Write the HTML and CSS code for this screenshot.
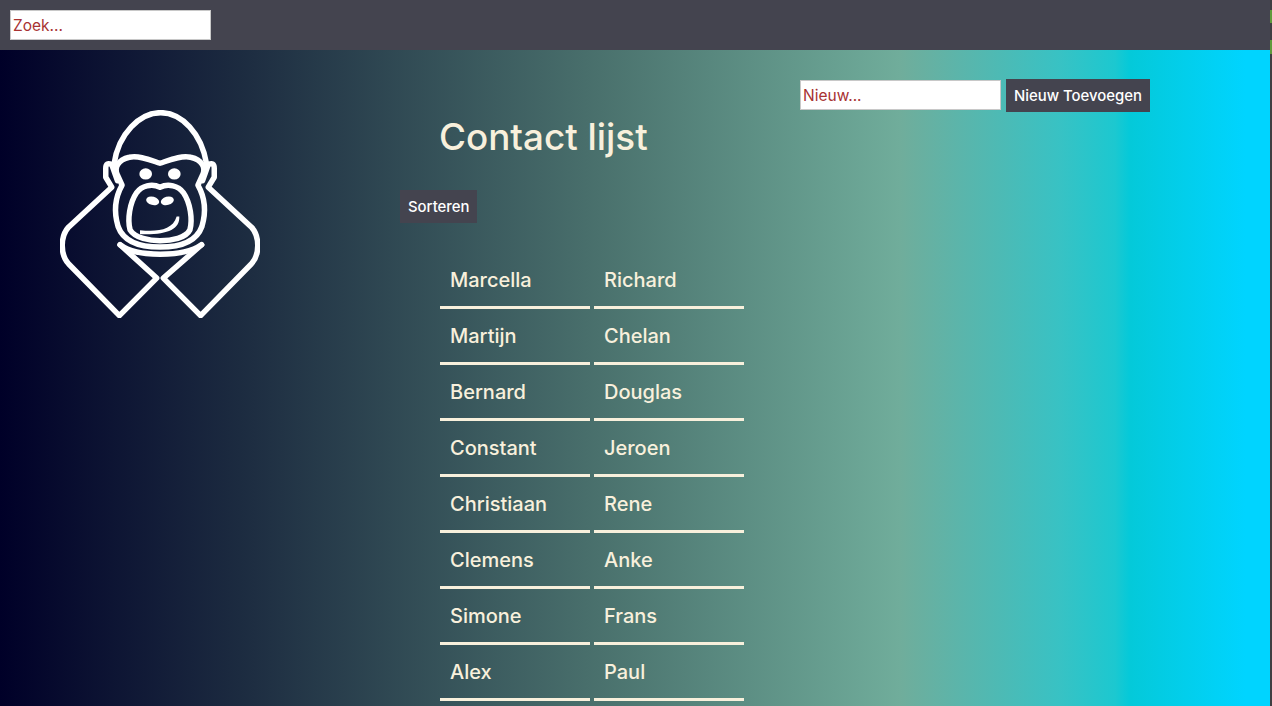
FILE: index.html
```html
<!DOCTYPE html>
<html lang="nl">
<head>
<meta charset="utf-8">
<title>Contact lijst</title>
<link rel="stylesheet" href="styles.css">
</head>
<body>
<header class="topbar">
  <input class="field" type="text" placeholder="Zoek...">
</header>
<main class="page">
  <aside class="logo-col">
    <svg class="logo" viewBox="60 60 600 625" width="200" height="208" aria-label="Gorilla logo">
      <g fill="none" stroke="#fff" stroke-width="16.5" stroke-linejoin="round" stroke-linecap="round">
        <path d="M222 222C235 130 300 68 362 68C425 68 485 130 500 222"/>
        <path d="M240 465L350 565L238 678L85 522C60 495 60 440 85 412L215 292L197 262V235Q197 215 215 224L232 272"/>
        <path d="M485 465L370 565L482 678L635 522C660 495 660 440 635 412L505 292L523 262V235Q523 215 505 224L488 272"/>
        <path d="M360 220C330 210 295 195 268 202C232 210 222 235 232 255L246 286C224 325 222 370 234 410C252 460 310 472 360 472C410 472 468 460 486 410C498 370 496 325 474 286L488 255C498 235 488 210 452 202C425 195 390 210 360 220Z"/>
        <path d="M360 292C335 280 305 288 290 308C268 340 262 390 270 420C285 445 330 453 360 453C395 453 438 445 450 420C458 390 452 340 430 308C415 288 385 280 360 292Z"/>
        <path d="M240 465C290 503 430 503 485 465"/>
      </g>
      <g fill="#fff">
        <ellipse cx="317" cy="252" rx="19" ry="17"/>
        <ellipse cx="403" cy="252" rx="19" ry="17"/>
        <ellipse cx="338" cy="333" rx="20" ry="12.5" transform="rotate(15 338 333)"/>
        <ellipse cx="382" cy="333" rx="20" ry="12.5" transform="rotate(-15 382 333)"/>
        <path d="M300 421C350 426 398 422 410 380L418 380C420 420 380 436 300 433Z"/>
      </g>
    </svg>
  </aside>
  <section class="list-col">
    <h1 class="title">Contact lijst</h1>
    <button class="btn" type="button">Sorteren</button>
    <ul class="contacts">
      <li>Marcella</li><li>Richard</li>
      <li>Martijn</li><li>Chelan</li>
      <li>Bernard</li><li>Douglas</li>
      <li>Constant</li><li>Jeroen</li>
      <li>Christiaan</li><li>Rene</li>
      <li>Clemens</li><li>Anke</li>
      <li>Simone</li><li>Frans</li>
      <li>Alex</li><li>Paul</li>
    </ul>
  </section>
  <form class="add-form">
    <input class="field" type="text" placeholder="Nieuw...">
    <button class="btn" type="button">Nieuw Toevoegen</button>
  </form>
</main>
</body>
</html>
```
FILE: styles.css
```css
* { box-sizing: border-box; }
html, body { height: 100%; }
body {
  margin: 0;
  padding-right: 2px;
  overflow: hidden;
  font-family: Inter, "Liberation Sans", sans-serif;
  display: flex;
  flex-direction: column;
  background: linear-gradient(180deg, #3f3f42 0 10px, #5f9a3c 10px 23px, #3f3f42 23px 40px, #5f9a3c 40px 54px, #3f3f42 54px);
}
.topbar {
  height: 50px;
  flex: none;
  padding: 10px;
  background: #44444f;
  display: flex;
  align-items: flex-start;
}
.field {
  width: 201px;
  height: 30px;
  padding: 1px 2px;
  border: 1px solid #c8c8c8;
  background: #fff;
  font: 15.5px Inter, "Liberation Sans", sans-serif;
  color: #a52a2a;
  border-radius: 0;
  outline: none;
}
.field::placeholder { color: #a83232; opacity: 1; }
.page {
  flex: 1;
  display: flex;
  align-items: flex-start;
  min-height: 0;
  background: linear-gradient(90deg, #000028 0, #1c2b40 240px, #4a716d 600px, #70ad9b 900px, #38c2c4 1060px, #1cc8d0 1115px, #04c9d9 1130px, #00d4ff 1245px);
}
.logo-col {
  width: 400px;
  flex: none;
  padding: 60px 0 0 60px;
}
.logo { display: block; }
.list-col {
  width: 400px;
  flex: none;
}
.title {
  margin: 63px 0 0 39px;
  font-size: 36.8px;
  line-height: 48px;
  font-weight: 500;
  color: #f8f0dc;
}
.btn {
  display: block;
  height: 33px;
  padding: 0 8px;
  border: 0;
  background: #44444f;
  color: #fff;
  font: 500 14.9px Inter, "Liberation Sans", sans-serif;
}
.list-col .btn { margin-top: 29px; }
.contacts {
  list-style: none;
  margin: 32px 0 0 40px;
  padding: 0;
  display: grid;
  grid-template-columns: 150px 150px;
  column-gap: 4px;
  grid-auto-rows: 56px;
}
.contacts li {
  height: 54px;
  padding: 0 10px;
  border-bottom: 3px solid #f8f0dc;
  color: #f8f0dc;
  font-size: 20px;
  font-weight: 500;
  line-height: 50px;
}
.add-form {
  display: flex;
  align-items: flex-start;
  gap: 5px;
  padding-top: 29px;
}
.add-form .field { margin-top: 1px; }
```
